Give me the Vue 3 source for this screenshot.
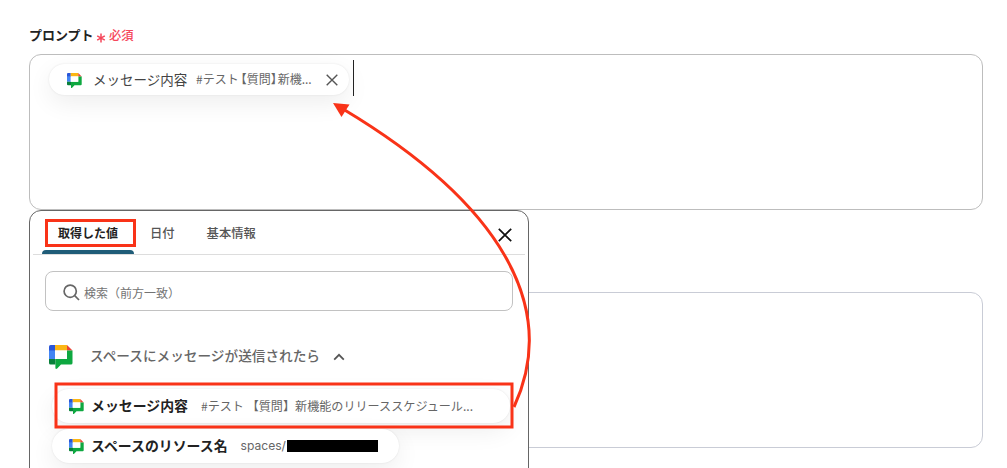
<template>
  <main class="page">
    <div class="label-row">
      <span class="label">プロンプト</span>
      <svg class="asterisk" viewBox="0 0 10 10">
        <path d="M5 .6v8.8M1.2 2.8l7.6 4.4M8.8 2.8L1.2 7.2" />
      </svg>
      <span class="required">必須</span>
    </div>

    <section class="editor">
      <div class="chip chip-input">
        <svg class="logo logo-sm" viewBox="0 0 24 24"><use href="#chat-logo" /></svg>
        <span class="chip-name">メッセージ内容</span>
        <span class="chip-value">#テスト<span class="tight">【質問】</span>新機...</span>
        <svg class="chip-close" viewBox="0 0 12 12"><path d="M.7.7l10.6 10.6M11.3.7L.7 11.3" /></svg>
      </div>
      <span class="caret" />
    </section>

    <section class="editor editor-second" />

    <!-- Value picker -->
    <aside class="picker">
      <nav class="tabs">
        <button
          v-for="tab in tabs"
          :key="tab"
          class="tab"
          :class="{ active: tab === activeTab }"
          @click="activeTab = tab"
        >
          {{ tab }}
        </button>
        <svg class="picker-close" viewBox="0 0 14 14"><path d="M.8.8l12.4 12.4M13.2.8L.8 13.2" /></svg>
      </nav>

      <div class="search">
        <svg class="search-icon" viewBox="0 0 17 17">
          <circle cx="7.2" cy="7.2" r="6.1" />
          <path d="M11.7 11.7l4.3 4.3" />
        </svg>
        <span>検索（前方一致）</span>
      </div>

      <div class="group">
        <svg class="logo logo-lg" viewBox="0 0 24 24"><use href="#chat-logo" /></svg>
        <span class="group-title">スペースにメッセージが送信されたら</span>
        <svg class="chevron" viewBox="0 0 12 8"><path d="M1.2 6.6L6 1.8l4.8 4.8" /></svg>
      </div>

      <div class="values">
        <div class="chip chip-long">
          <svg class="logo logo-sm" viewBox="0 0 24 24"><use href="#chat-logo" /></svg>
          <b class="value-name">メッセージ内容</b>
          <span class="value-text">#テスト 【質問】新機能のリリーススケジュール...</span>
        </div>
        <div class="chip chip-short">
          <svg class="logo logo-sm" viewBox="0 0 24 24"><use href="#chat-logo" /></svg>
          <b class="value-name">スペースのリソース名</b>
          <span class="value-text value-path">spaces/</span>
          <span class="redacted" />
        </div>
      </div>
    </aside>

    <!-- Highlights and arrow -->
    <svg class="marks" viewBox="0 0 1007 468">
      <defs>
        <g id="chat-logo">
          <path fill="#4285f4" d="M0 5h6v9H0z" />
          <path fill="#2a56d8" d="M1.6 0H6v5.5H0V1.6Q0 0 1.6 0z" />
          <path fill="#fbb614" d="M6 0h12v5.5H6z" />
          <path fill="#ea4335" d="M18 0l5.5 5.5H18z" />
          <path fill="#0ea840" d="M18 5.5h5.5V18q0 1.6-1.6 1.6H12l-3.8 4Q6.6 24.6 6.4 23V14H18z" />
          <path fill="#08803a" d="M0 14h6.4v5.6H1.6Q0 19.6 0 18z" />
          <path fill="#fff" d="M6 5.5h12V14H6z" />
        </g>
      </defs>
      <rect x="46.5" y="220.5" width="88" height="25" />
      <rect x="56" y="384" width="456" height="43" />
      <path class="curve" d="M514 407C559 310 505 206 343 109" />
      <path class="head" d="M333 103l16.5 1.500-8 12.500z" />
    </svg>
  </main>
</template>

<script setup>
import { ref } from 'vue'

const tabs = ['取得した値', '日付', '基本情報']
const activeTab = ref('取得した値')
</script>

<style>
body {
  margin: 0;
  background: #fff;
}
</style>

<style scoped>
.page {
  position: relative;
  box-sizing: border-box;
  width: 1007px;
  height: 468px;
  padding: 25px 24px 0 29px;
  overflow: hidden;
  background: #fff;
  color: #222;
  font-family: 'Noto Sans CJK JP', sans-serif;
  white-space: nowrap;
}

.page * {
  box-sizing: border-box;
}

svg {
  display: block;
  flex: none;
  fill: none;
}

.label-row {
  display: flex;
  align-items: center;
  height: 20px;
  margin-bottom: 9px;
}

.label {
  width: 67px;
  padding-bottom: 1px;
  font-size: 13px;
  font-weight: 700;
}

.asterisk {
  width: 10px;
  height: 10px;
  margin-top: 6px;
  stroke: #f5475b;
  stroke-width: 1.5;
}

.required {
  margin-left: 3px;
  color: #f5475b;
  font-size: 12.3px;
  font-weight: 500;
}

.editor {
  display: flex;
  height: 156px;
  padding: 5px 19px;
  border: 1px solid #bdbdbd;
  border-radius: 12px;
}

.editor-second {
  margin-top: 82px;
  border-color: #c9ccd6;
}

.chip {
  display: flex;
  align-items: center;
  border-radius: 18px;
  background: #fff;
  box-shadow: 0 0 2px rgba(0, 0, 0, 0.1), 0 8px 24px rgba(0, 0, 0, 0.07);
}

.chip-input {
  width: 300px;
  height: 31px;
  margin-top: 4px;
  padding-left: 18px;
}

.logo-sm {
  width: 15px;
  height: 15px;
}

.chip-input .logo-sm {
  margin-top: 1px;
}

.chip-name {
  width: 103px;
  margin-left: 11px;
  padding-bottom: 2px;
  color: #444;
  font-size: 13.5px;
}

.chip-value {
  width: 130px;
  padding-bottom: 2px;
  color: #666;
  font-size: 12px;
}

.tight {
  margin: 0 1px 0 2px;
  font-feature-settings: 'halt';
}

.chip-close {
  width: 12px;
  height: 12px;
  stroke: #555;
  stroke-width: 1.4;
}

.caret {
  width: 1px;
  height: 36px;
  margin-left: 4px;
  background: #222;
}

.picker {
  position: absolute;
  top: 210px;
  left: 29px;
  width: 500px;
  height: 280px;
  padding: 0 3px;
  overflow: hidden;
  border: 1px solid #666;
  border-radius: 12px;
  background: #fff;
}

.tabs {
  display: flex;
  height: 44px;
  padding-left: 9px;
  border-bottom: 1px solid #ddd;
}

.tab {
  position: relative;
  height: 43px;
  padding: 0 16px;
  border: 0;
  background: none;
  color: #555;
  font: 500 12.3px 'Noto Sans CJK JP', sans-serif;
  cursor: pointer;
}

.tab.active {
  width: 92px;
  color: #222;
  font-size: 12px;
  font-weight: 700;
}

.tab.active::after {
  position: absolute;
  right: 0;
  bottom: 0;
  left: 0;
  height: 4px;
  border-radius: 4px 4px 0 0;
  background: #1f5c78;
  content: '';
}

.picker-close {
  width: 14px;
  height: 14px;
  margin: 17px 13px 0 auto;
  stroke: #111;
  stroke-width: 1.7;
}

.search {
  display: flex;
  align-items: center;
  width: 468px;
  height: 40px;
  margin: 16px 0 0 12px;
  padding: 2px 0 0 17px;
  border: 1px solid #c2c2c2;
  border-radius: 8px;
  color: #737373;
  font-size: 12px;
}

.search-icon {
  width: 17px;
  height: 17px;
  margin-right: 4px;
  stroke: #666;
  stroke-width: 1.7;
}

.group {
  display: flex;
  align-items: center;
  height: 30px;
  margin: 30px 0 0 16px;
}

.logo-lg {
  width: 24px;
  height: 24px;
  margin-top: 2px;
}

.group-title {
  width: 230px;
  margin-left: 17px;
  padding-bottom: 2px;
  color: #666;
  font-size: 13.65px;
  font-weight: 500;
}

.chevron {
  width: 12px;
  height: 8px;
  margin: 2px 0 0 13px;
  stroke: #555;
  stroke-width: 1.8;
}

.values {
  display: flex;
  flex-direction: column;
  gap: 6px;
  margin: 18px 0 0 19px;
}

.values .chip {
  height: 34px;
  padding-left: 17px;
}

.chip-long {
  width: 458px;
}

.chip-short {
  position: relative;
  width: 347px;
}

.value-name {
  margin-left: 7px;
  padding-bottom: 2px;
  font-size: 13.9px;
  font-weight: 700;
}

.value-text {
  margin-left: 13px;
  padding-bottom: 2px;
  color: #666;
  font-size: 12.1px;
}

.value-path {
  width: 46px;
  font-family: Inter, sans-serif;
}

.redacted {
  width: 91px;
  height: 12px;
  margin-bottom: 1px;
  background: #000;
}

.marks {
  position: absolute;
  inset: 0;
  width: 1007px;
  height: 468px;
  pointer-events: none;
}

.marks rect,
.marks .curve {
  stroke: #f93318;
  stroke-width: 3;
}

.marks .head {
  fill: #f93318;
}
</style>
